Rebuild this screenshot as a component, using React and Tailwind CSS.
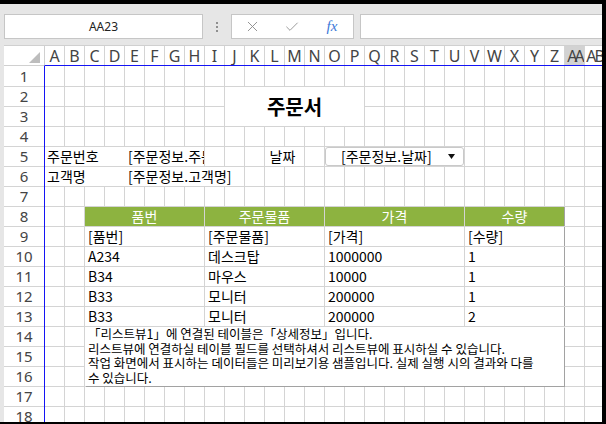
import { X, Check } from "lucide-react";

const COLS = [
  "A", "B", "C", "D", "E", "F", "G", "H", "I", "J", "K", "L", "M", "N",
  "O", "P", "Q", "R", "S", "T", "U", "V", "W", "X", "Y", "Z", "AA", "AB",
];
const ROW_COUNT = 18;

const kr = "font-['Noto_Sans_CJK_KR','Noto_Sans',sans-serif]";
const ui = "font-['Noto_Sans','Noto_Sans_CJK_KR',sans-serif]";

// merged column spans of the 4 table columns
const spans = [
  "col-start-3 col-end-9",
  "col-start-9 col-end-15",
  "col-start-15 col-end-22",
  "col-start-22 col-end-27 shadow-[1px_0_0_#a2a2a2]",
];
const rowStarts = ["row-start-8", "row-start-9", "row-start-10", "row-start-11", "row-start-12", "row-start-13"];

const headers = ["품번", "주문물품", "가격", "수량"];
const rows = [
  ["[품번]", "[주문물품]", "[가격]", "[수량]"],
  ["A234", "데스크탑", "1000000", "1"],
  ["B34", "마우스", "10000", "1"],
  ["B33", "모니터", "200000", "1"],
  ["B33", "모니터", "200000", "2"],
];

const gridTpl = "grid grid-cols-[repeat(28,19px)] grid-rows-[20px_repeat(17,19px)] gap-px";

function Toolbar() {
  return (
    <div className="h-[41px] shrink-0 flex items-start pt-[10px]">
      <div className={`ml-1 w-[199px] h-[25px] bg-white border border-[#c6c6c6] flex items-center justify-center text-[12px] text-[#222] ${ui}`}>
        AA23
      </div>
      <div className="w-[28px] h-[25px] flex flex-col items-center justify-center gap-[2px]">
        <div className="w-[2px] h-[2px] bg-[#8f8f8f]"></div>
        <div className="w-[2px] h-[2px] bg-[#8f8f8f]"></div>
        <div className="w-[2px] h-[2px] bg-[#8f8f8f]"></div>
      </div>
      <div className="w-[123px] h-[25px] bg-white border border-[#c6c6c6] flex items-center">
        <div className="w-[40px] flex justify-center text-[#8c8c8c]">
          <X size={17} strokeWidth={1.3} />
        </div>
        <div className="w-[40px] flex justify-center text-[#8c8c8c]">
          <Check size={16} strokeWidth={1.3} />
        </div>
        <div className="w-[40px] flex justify-center text-[15px] italic text-[#3b78d8] font-['Liberation_Serif',serif]">
          fx
        </div>
      </div>
      <div className="ml-[6px] flex-1 h-[25px] bg-white border border-r-0 border-[#c6c6c6]"></div>
    </div>
  );
}

function ColumnHeader() {
  return (
    <div className="h-[21px] shrink-0 flex pl-1">
      <div className="w-[40px] h-[21px] bg-white border-t border-b border-[#d0d0d0] flex items-end justify-end pr-[4px] pb-[2px]">
        <svg width="11" height="11" viewBox="0 0 11 11">
          <polygon points="11,0 11,11 0,11" fill="#bdbdbd" />
        </svg>
      </div>
      <div className="border-l border-t border-[#d0d0d0] border-b border-b-[#1414f5] overflow-hidden flex-1 min-w-0">
        <div className="grid grid-cols-[repeat(28,19px)] gap-x-px bg-[#d4d4d4] h-[19px] w-max">
          {COLS.map((c) => (
            <div
              key={c}
              className={`h-[19px] flex items-center justify-center overflow-hidden text-[16px] text-[#444] ${ui} ${
                c === "AA" ? "bg-[#d2d2d2] tracking-[-3px]" : "bg-white"
              } ${c === "AB" ? "tracking-[-2px]" : ""}`}
            >
              {c}
            </div>
          ))}
        </div>
      </div>
    </div>
  );
}

function RowHeader() {
  return (
    <div className="w-[40px] shrink-0">
      <div className="grid grid-rows-[20px_repeat(17,19px)] gap-y-px bg-[#d4d4d4]">
        {Array.from({ length: ROW_COUNT }).map((_, i) => (
          <div key={i} className={`bg-white flex items-center justify-center text-[15px] text-[#444] ${ui}`}>
            {i + 1}
          </div>
        ))}
      </div>
    </div>
  );
}

function Sheet() {
  return (
    <div className="flex-1 min-w-0 border-l border-[#1414f5] overflow-hidden">
      <div className="grid w-max">
        {/* gridlines */}
        <div className={`${gridTpl} bg-[#d4d4d4] col-start-1 row-start-1`}>
          {Array.from({ length: COLS.length * ROW_COUNT }).map((_, i) => (
            <div key={i} className="bg-white"></div>
          ))}
        </div>

        {/* cell contents */}
        <div className={`${gridTpl} col-start-1 row-start-1 text-[14px] text-black ${kr}`}>
          <div className="col-start-10 col-end-17 row-start-2 row-end-4 bg-white flex items-center justify-center text-[20px] font-bold">
            주문서
          </div>

          <div className="col-start-1 col-end-9 row-start-5 bg-white flex items-center">
            <span className="w-[83px] pl-[2px] whitespace-nowrap">주문번호</span>
            <span className="w-[76px] overflow-hidden whitespace-nowrap">[주문정보.주문번호]</span>
          </div>
          <div className="col-start-12 col-end-14 row-start-5 bg-white flex items-center justify-center pr-[4px]">
            날짜
          </div>
          <div className="col-start-15 col-end-22 row-start-5 bg-white border border-[#c9c9c9] rounded-[3px] flex items-center pl-[15px] pr-[8px]">
            <span className="whitespace-nowrap">[주문정보.날짜]</span>
            <svg className="ml-auto" width="7" height="5" viewBox="0 0 7 5">
              <polygon points="0,0 7,0 3.5,5" fill="#111" />
            </svg>
          </div>

          <div className="col-start-1 col-end-11 row-start-6 bg-white flex items-center">
            <span className="w-[83px] pl-[2px] whitespace-nowrap">고객명</span>
            <span className="whitespace-nowrap">[주문정보.고객명]</span>
          </div>

          {headers.map((h, c) => (
            <div key={h} className={`${spans[c]} ${rowStarts[0]} bg-[#8db340] text-white flex items-center justify-center`}>
              {h}
            </div>
          ))}

          {rows.map((r, ri) =>
            r.map((v, c) => (
              <div key={`${ri}-${c}`} className={`${spans[c]} ${rowStarts[ri + 1]} bg-white flex items-center pl-[3px] whitespace-nowrap`}>
                {v}
              </div>
            ))
          )}

          <div className="col-start-3 col-end-27 row-start-14 row-end-17 bg-white shadow-[1px_1px_0_#a2a2a2] pl-[3px] text-[12.5px] leading-[14.5px] whitespace-nowrap">
            <div>「리스트뷰1」에 연결된 테이블은「상세정보」입니다.</div>
            <div>리스트뷰에 연결하실 테이블 필드를 선택하셔서 리스트뷰에 표시하실 수 있습니다.</div>
            <div>작업 화면에서 표시하는 데이터들은 미리보기용 샘플입니다. 실제 실행 시의 결과와 다를</div>
            <div>수 있습니다.</div>
          </div>
        </div>
      </div>
    </div>
  );
}

export default function App() {
  return (
    <div className="w-[606px] h-[424px] bg-black pt-1 pr-1 pb-[2px] overflow-hidden">
      <div className="w-full h-full bg-[#e6e6e6] flex flex-col overflow-hidden">
        <Toolbar />
        <ColumnHeader />
        <div className="flex-1 min-h-0 flex pl-1 overflow-hidden">
          <RowHeader />
          <Sheet />
        </div>
      </div>
    </div>
  );
}
